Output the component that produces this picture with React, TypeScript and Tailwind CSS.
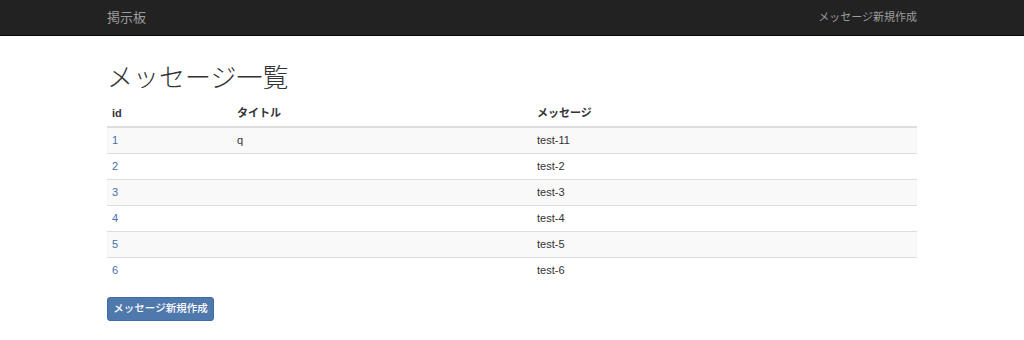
const rows = [
  { id: 1, title: "q", message: "test-11" },
  { id: 2, title: "", message: "test-2" },
  { id: 3, title: "", message: "test-3" },
  { id: 4, title: "", message: "test-4" },
  { id: 5, title: "", message: "test-5" },
  { id: 6, title: "", message: "test-6" },
];

export default function App() {
  return (
    <div
      className="min-h-[340px] bg-white text-[#333]"
      style={{ fontFamily: '"Liberation Sans", "Noto Sans CJK JP", sans-serif' }}
    >
      <nav className="h-9 border-b border-[#080808] bg-[#222]">
        <div className="mx-auto flex h-full w-[810px] items-center justify-between">
          <a className="text-[13px] text-[#9d9d9d]" href="#">
            掲示板
          </a>
          <a className="text-[11px] text-[#9d9d9d]" href="#">
            メッセージ新規作成
          </a>
        </div>
      </nav>

      <div className="mx-auto w-[810px]">
        <h1 className="mt-[26px] mb-[7px] text-[26px] font-light leading-[32px] text-[#333]">
          メッセージ一覧
        </h1>
        <table className="w-full border-collapse text-[11px]">
          <thead>
            <tr className="h-[26px] border-b-2 border-[#ddd] text-left">
              <th className="w-[125px] px-[5px] font-bold">id</th>
              <th className="w-[300px] px-[5px] font-bold">タイトル</th>
              <th className="px-[5px] font-bold">メッセージ</th>
            </tr>
          </thead>
          <tbody>
            {rows.map((r, i) => (
              <tr
                key={r.id}
                className={
                  (i % 2 === 0 ? "bg-[#f9f9f9] " : "bg-white ") +
                  "h-[26px] border-t border-[#ddd]"
                }
              >
                <td className="px-[5px]">
                  <a className="text-[#3f70ad]" href="#">
                    {r.id}
                  </a>
                </td>
                <td className="px-[5px] text-[#333]">{r.title}</td>
                <td className="px-[5px]">{r.message}</td>
              </tr>
            ))}
          </tbody>
        </table>
        <button
          type="button"
          className="mt-[14px] h-6 w-[107px] rounded-[3px] border border-[#3d6ba3] bg-[#4f78ad] text-[10.5px] font-medium text-white"
        >
          メッセージ新規作成
        </button>
      </div>
    </div>
  );
}
